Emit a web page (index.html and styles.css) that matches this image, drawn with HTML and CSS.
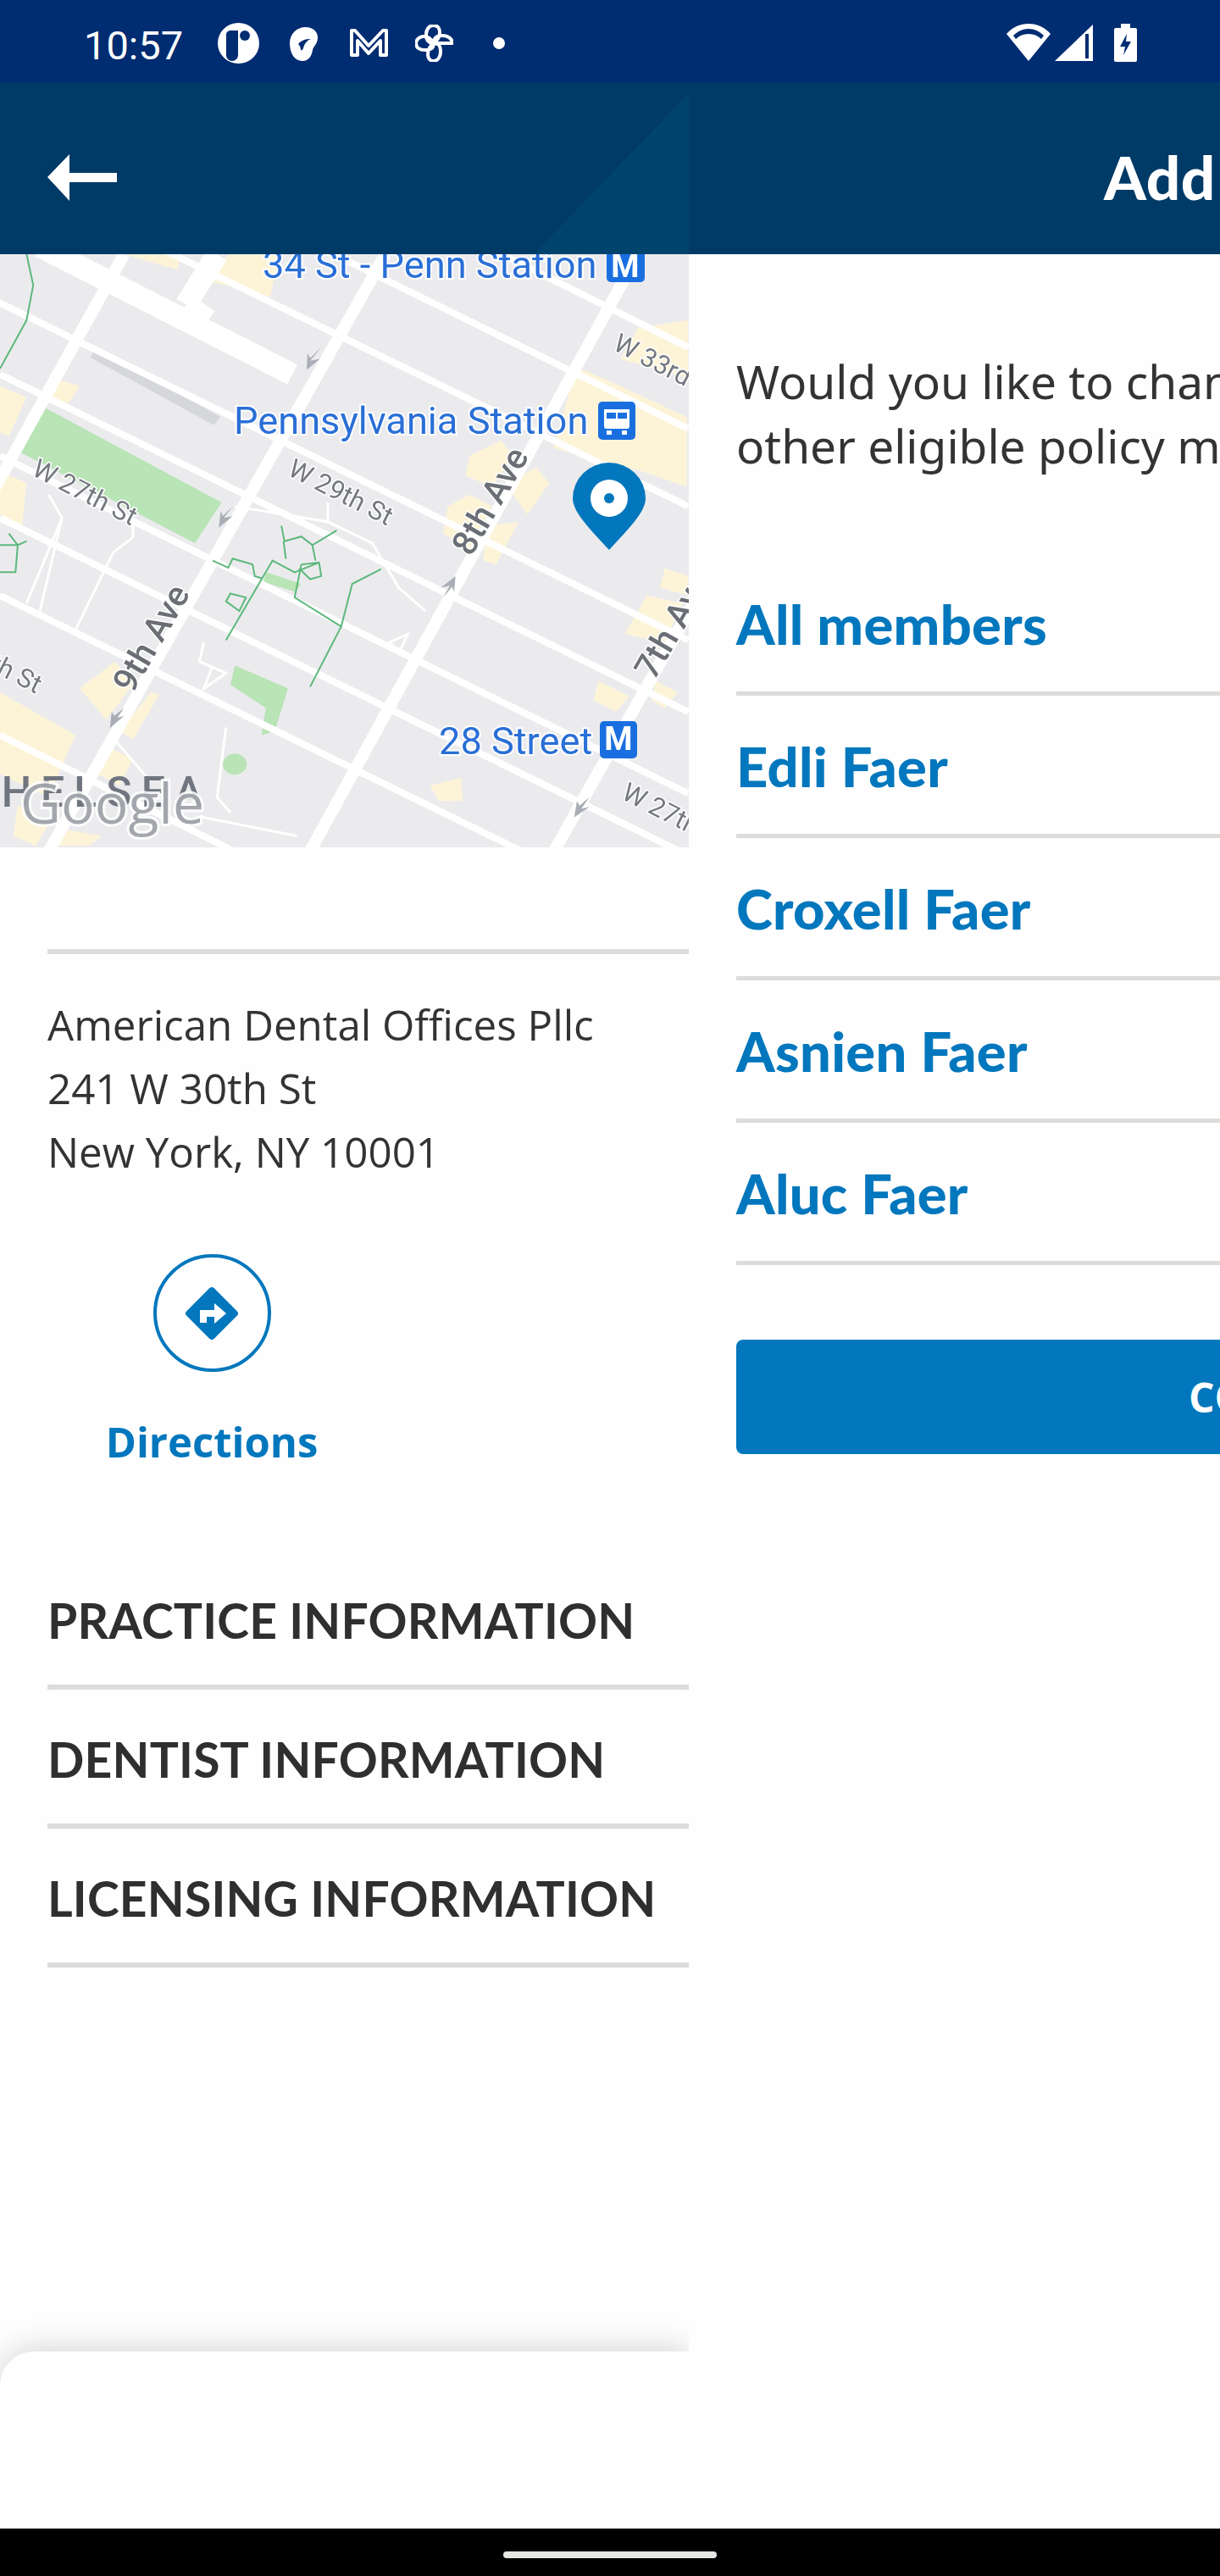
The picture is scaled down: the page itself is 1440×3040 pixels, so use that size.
FILE: index.html
```html
<!DOCTYPE html>
<html lang="en">
<head>
<meta charset="utf-8">
<title>Add members</title>
<link rel="stylesheet" href="styles.css">
</head>
<body>
<div class="screen">
  <header class="status">
    <span class="time">10:57</span>
    <svg class="ic ic1" viewBox="0 0 49 48"><ellipse cx="24.500" cy="24" rx="24.500" ry="24" class="w"/><path d="M10 15a5 5 0 0 1 5-6h9v29a5 5 0 0 1-14 0z" class="d"/><path d="M19 14h5v24h-5z" class="d"/><circle cx="32" cy="15" r="6" class="d"/></svg>
    <svg class="ic ic2" viewBox="0 0 34 40"><path d="M1 19C1 8 9 0 20 0c8 0 14 5 14 12 0 8-5 10-6 15-1 7-5 13-12 13C6 40 1 30 1 19z" class="w"/><path d="M11 20c4-5 9-6 15-6-5 2-8 6-9 11-1 2-2 3-3 2 0-3-1-5-3-7z" class="d"/></svg>
    <svg class="ic ic3" viewBox="0 0 45 34"><path d="M2 32V3h4l16 18L39 3h4v29h-7V15L22 30 9 15v17z" class="o"/></svg>
    <svg class="ic ic4" viewBox="0 0 45 44"><path d="M22 22C16 22 13 19 13 12 13 5 17 1 22 1c5 0 7 4 7 8 0 6-3 10-7 13zM22 22c0-6 3-9 10-9 7 0 12 4 12 9H22zM22 22c6 0 8 3 8 10 0 7-4 11-8 11-5 0-7-4-7-8 0-6 3-10 7-13zM22 22c0 6-3 8-10 8C5 30 1 27 1 22c0-4 4-8 9-8 5 0 9 3 12 8z" class="o"/></svg>
    <span class="dot"></span>
    <span class="spacer"></span>
    <svg class="ic ic5" viewBox="0 0 52 44"><path d="M26 44 0 12C7 4 16 0 26 0s19 4 26 12z" class="w"/><path d="M8 14C13 9 19 6 26 6s13 3 18 8l-3 4C37 14 32 12 26 12s-11 2-15 6z" class="d"/></svg>
    <svg class="ic ic6" viewBox="0 0 45 43"><path d="M0 43 45 0v43z" class="w"/><path d="M36 11h4v29h-4z" class="d"/></svg>
    <svg class="ic ic7" viewBox="0 0 27 45"><path d="M8 0h11v5h6a2 2 0 0 1 2 2v36a2 2 0 0 1-2 2H2a2 2 0 0 1-2-2V7a2 2 0 0 1 2-2h6z" class="w"/><path d="M15 12 7 27h6l-2 10 9-16h-6z" class="d"/></svg>
  </header>

  <div class="appbar">
    <div class="appbar-left">
      <svg class="back" viewBox="0 0 82 55"><path d="M0 27 26 0v22h56v11H26v22z" class="w"/></svg>
    </div>
    <h1 class="title">Add</h1>
  </div>

  <main class="content">
    <section class="left">
      <svg class="map" viewBox="0 0 813 700">
        <rect width="813" height="700" class="m-bg"/>
        <g transform="scale(.523 .4577)">
          <path class="m-y" d="M0 340 60 370 20 470 0 460zM0 560 60 590 50 700 0 670zM120 320 180 340 150 390 110 370zM0 1130 170 1240 110 1400 0 1340zM180 1120 260 1050 300 1110 240 1200zM40 1420 110 1470 80 1525 30 1500zM130 1480 230 1500 200 1525 120 1525zM240 1270 300 1300 270 1370 220 1340zM340 1130 360 1135 300 1250 270 1230zM1060 520 1130 480 1160 520 1110 600 1050 570zM1010 650 1060 620 1110 650 1060 760 1000 720zM1100 700 1170 690 1120 800 1090 790zM1140 590 1210 550 1240 590 1190 670zM1250 500 1300 290 1400 340 1550 420 1550 600 1450 560zM1440 190 1553 170 1553 320 1400 270zM1460 880 1540 900 1500 1000 1410 980zM1500 810 1553 830 1553 880 1490 860zM1350 1100 1420 1140 1390 1180 1340 1150zM1480 1100 1530 1130 1500 1170 1470 1150zM970 1370 1040 1350 1045 1410 990 1410zM440 60 520 0 630 0 610 110zM280 0 410 0 400 40z"/>
          <path class="m-g" d="M100 395 500 640 440 745 45 510zM530 1060 650 1120 620 1230 590 1240 600 1170 520 1110zM600 820 680 850 665 870 595 845z"/>
          <circle cx="530" cy="1315" r="27" class="m-g"/>
          <path class="m-rail" d="M210 255 490 430"/>
          <g class="m-st">
            <path d="M-10 120 1553 995M0 310 1553 1180M0 520 1553 1390M0 680 1553 1550M0 880 1250 1580M0 1240 600 1580M300 -50 1553 650M700 -30 1553 450M1080 -30 1553 240"/>
          </g>
          <g class="m-av">
            <path d="M100 1560 870 0M690 1560 1440 0M1240 1560 1600 830M-20 620 280 0"/>
          </g>
          <path class="m-wide" d="M90 -20 660 310M420 130 490 0M420 130 470 170"/>
          <g class="m-path">
            <path d="M530 650 740 690 840 745 900 860 960 920M740 640V690M110 620 140 680 90 920M300 690 300 730 255 770 170 970M140 680 60 900M460 1000 450 1050 510 1080 460 1120 480 1060M510 1220 490 1400 520 1440M250 1240 340 1360M450 1450 670 1500M880 1000 920 980 900 1030z"/>
          </g>
          <g class="m-tr">
            <path d="M60 0 75 80 60 170 0 295M0 820 35 820 40 750 20 720M40 750 60 740M0 750 40 750M480 790 515 808 525 785 570 800 575 830 590 835M510 995 615 790 665 820 720 795M635 700 642 740 680 728 705 750 760 712M705 750 712 790M640 740 645 785M680 800 665 885 770 960 795 850 860 812M770 960 700 1115M520 875 555 885 540 920 510 895zM680 800 720 795 725 830 700 838 675 810"/>
          </g>
          <path class="m-arrow" d="M725 240 700 275 722 270 692 298 694 255 700 268zM525 650 505 680 525 675 494 705 498 662 503 675zM280 1170 265 1195 280 1190 248 1222 252 1180 258 1190zM1330 1400 1312 1430 1330 1425 1296 1452 1302 1410 1308 1422zM1000 885 1015 855 995 860 1028 830 1025 870 1020 858z"/>
        </g>

        <text class="m-blue" x="310" y="28">34 St - Penn Station</text>
        <rect x="716" y="-8" width="45" height="41" rx="5" class="m-badge"/>
        <text class="m-badge-t" x="738" y="27">M</text>
        <text class="m-blue" x="276" y="212">Pennsylvania Station</text>
        <rect x="706" y="174" width="44" height="45" rx="5" class="m-badge"/>
        <path class="w" d="M713 183h30v20a3 3 0 0 1-3 3h-24a3 3 0 0 1-3-3zM716 208h6v5h-6zM734 208h6v5h-6z"/>
        <path class="m-badge" d="M716 187h11v7h-11zM729 187h11v7h-11z"/>
        <text class="m-blue" x="518" y="590">28 Street</text>
        <rect x="708" y="551" width="44" height="44" rx="5" class="m-badge"/>
        <text class="m-badge-t" x="730" y="585">M</text>

        <text class="m-label" transform="translate(338 260) rotate(27)">W 29th St</text>
        <text class="m-label" transform="translate(36 260) rotate(27)">W 27th St</text>
        <text class="m-label" transform="translate(722 112) rotate(27)">W 33rd St</text>
        <text class="m-label" transform="translate(732 642) rotate(27)">W 27th</text>
        <text class="m-label" transform="translate(-14 490) rotate(27)">th St</text>
        <text class="m-ave" transform="translate(556 358) rotate(-60)">8th Ave</text>
        <text class="m-ave" transform="translate(156 520) rotate(-60)">9th Ave</text>
        <text class="m-ave" transform="translate(772 504) rotate(-60)">7th Ave</text>

        <text class="m-hood" x="-42" y="652">CHELSEA</text>
        <text class="m-google" x="24" y="672">Google</text>

        <path class="m-pin" d="M719 349C695 323 676 304 676 288a43 42 0 0 1 86 0c0 16-19 35-43 61z"/>
        <circle cx="719" cy="288" r="22" class="w"/>
        <circle cx="719" cy="288" r="6" class="m-pin"/>
      </svg>

      <div class="left-body">
        <hr class="rule rule-top">
        <address class="addr">
          <span class="addr-l1">American Dental Offices Pllc</span>
          <span class="addr-l2">241 W 30th St</span>
          <span class="addr-l3">New York, NY 10001</span>
        </address>
        <div class="dir">
          <span class="dir-circle">
            <svg class="dir-ic" viewBox="0 0 70 70"><rect x="12" y="12" width="46" height="46" rx="4" transform="rotate(45 35 35)" class="b"/><path d="M21 46V31h17v-8l14 12-14 12v-8h-9v7z" class="w"/></svg>
          </span>
          <span class="dir-label">Directions</span>
        </div>
        <div class="sec sec-first">PRACTICE INFORMATION</div>
        <div class="sec">DENTIST INFORMATION</div>
        <div class="sec">LICENSING INFORMATION</div>
      </div>
      <div class="sheet"></div>
    </section>

    <section class="right">
      <p class="intro"><span>Would you like to change the dentist for</span><span>other eligible policy members?</span></p>
      <ul class="members">
        <li>All members</li>
        <li>Edli Faer</li>
        <li>Croxell Faer</li>
        <li>Asnien Faer</li>
        <li>Aluc Faer</li>
      </ul>
      <div class="btn">CONTINUE</div>
    </section>
  </main>

  <footer class="nav"><span class="pill"></span></footer>
</div>
</body>
</html>
```

FILE: styles.css
```css
* { box-sizing: border-box; }
html, body { margin: 0; padding: 0; background: #fefefe; }
.screen { width: 1440px; height: 3040px; display: flex; flex-direction: column; overflow: hidden; font-family: "Open Sans", sans-serif; color: #333; }

.w { fill: #fff; }
.d { fill: #002c72; }
.b { fill: #0277bd; }
.o { fill: none; stroke: #fff; stroke-width: 4; stroke-linejoin: round; }

.status { height: 97px; background: #002c72; display: flex; align-items: flex-start; padding-left: 99px; flex: none; }
.time { font: 400 47px/1 Roboto, sans-serif; color: #fff; margin-top: 30px; width: 116px; white-space: nowrap; }
.ic { display: block; flex: none; }
.ic1 { width: 49px; height: 48px; margin: 27px 0 0 42px; }
.ic2 { width: 34px; height: 40px; margin: 32px 0 0 35px; }
.ic3 { width: 45px; height: 34px; margin: 33px 0 0 38px; }
.ic4 { width: 45px; height: 44px; margin: 29px 0 0 32px; }
.dot { width: 14px; height: 14px; border-radius: 50%; background: #fff; margin: 44px 0 0 47px; }
.spacer { flex: 1; }
.ic5 { width: 52px; height: 44px; margin: 28px 0 0 0; }
.ic6 { width: 45px; height: 43px; margin: 29px 0 0 5px; }
.ic7 { width: 27px; height: 45px; margin: 28px 98px 0 25px; }

.appbar { height: 203px; background: #003a66; display: flex; flex: none; color: #fff; }
.appbar-left { width: 813px; flex: none; position: relative; padding: 85px 0 0 56px; }
.appbar-left::after { content: ""; position: absolute; inset: 0; background: #00446e; clip-path: polygon(630px 203px, 813px 13px, 813px 203px); }
.back { width: 82px; height: 55px; display: block; }
.title { margin: 0; padding: 69px 0 0 490px; font: 900 71px/1.2 Lato, sans-serif; letter-spacing: .6px; white-space: nowrap; }

.content { flex: 1; display: flex; min-height: 0; }

.left { width: 813px; flex: none; display: flex; flex-direction: column; position: relative; overflow: hidden; }
.map { width: 813px; height: 700px; display: block; flex: none; filter: blur(.6px); }
.m-bg { fill: #ebebee; }
.m-y { fill: #fdf4d8; }
.m-g { fill: #b9e4b6; }
.m-rail { stroke: #d6d7da; stroke-width: 26; fill: none; }
.m-st path { stroke: #fff; stroke-width: 8; vector-effect: non-scaling-stroke; fill: none; }
.m-av path { stroke: #fff; stroke-width: 14; vector-effect: non-scaling-stroke; fill: none; }
.m-wide { stroke: #fff; stroke-width: 26; vector-effect: non-scaling-stroke; fill: none; }
.m-path path { stroke: #fff; stroke-width: 3; vector-effect: non-scaling-stroke; fill: none; }
.m-tr path { stroke: #5db87b; stroke-width: 2; vector-effect: non-scaling-stroke; fill: none; }
.m-arrow { fill: #a9adb5; }
.m-blue { font: 400 45.200px Roboto, sans-serif; fill: #2a6fd6; stroke: #fff; stroke-width: 4; paint-order: stroke; }
.m-badge { fill: #1a6fe0; }
.m-badge-t { font: 700 38px Roboto, sans-serif; fill: #fff; text-anchor: middle; }
.m-label { font: 400 31px Roboto, sans-serif; fill: #75797f; stroke: #fff; stroke-width: 3; paint-order: stroke; }
.m-ave { font: 500 41px Roboto, sans-serif; fill: #6b6f75; stroke: #fff; stroke-width: 3; paint-order: stroke; }
.m-hood { font: 500 50px Roboto, sans-serif; fill: #70757f; letter-spacing: 11px; }
.m-google { font: 500 66px "Open Sans", sans-serif; fill: #8c9097; fill-opacity: .8; stroke: #fff; stroke-width: 6; stroke-opacity: .85; paint-order: stroke; }
.m-pin { fill: #0277bd; }

.left-body { padding-left: 56px; display: flex; flex-direction: column; }
.rule { margin: 0; border: 0; height: 6px; background: #dcdcda; }
.rule-top { margin-top: 120px; }
.addr { font: normal 400 49.300px/75px "Open Sans", sans-serif; color: #333; margin-top: 45px; display: flex; flex-direction: column; }
.dir { width: 388px; display: flex; flex-direction: column; align-items: center; margin-top: 84px; }
.dir-circle { width: 139px; height: 139px; border: 4px solid #0277bd; border-radius: 50%; display: flex; align-items: center; justify-content: center; }
.dir-ic { width: 70px; height: 70px; display: block; }
.dir-label { font: 700 49px/68px "Open Sans", sans-serif; color: #0277bd; margin-top: 48px; }
.sec { height: 164px; border-bottom: 6px solid #dcdcda; font: 700 57px/1 Lato, sans-serif; color: #2f2f2f; padding-top: 54px; white-space: nowrap; letter-spacing: .2px; }
.sec-first { margin-top: 95px; }

.sheet { position: absolute; left: 0; top: 2475px; width: 813px; height: 300px; background: #fefefe; border-top-left-radius: 40px; box-shadow: 0 -2px 38px rgba(0, 0, 0, .18); }

.right { flex: 1; min-width: 0; padding-left: 56px; overflow: hidden; }
.intro { margin: 112px 0 0; width: 1200px; font: 400 55px/76px "Noto Sans", sans-serif; color: #333; display: flex; flex-direction: column; white-space: nowrap; }
.members { list-style: none; margin: 89px 0 0; padding: 0; width: 700px; }
.members li { height: 168px; border-bottom: 5px solid #dcdcda; font: 900 65px/1 Lato, sans-serif; letter-spacing: .3px; color: #0277bd; padding-top: 51px; white-space: nowrap; }
.btn { margin-top: 88px; width: 700px; height: 135px; border-radius: 8px; background: #0277bd; color: #fff; font: 700 48px/135px "Open Sans", sans-serif; padding-left: 534px; white-space: nowrap; }

.nav { height: 56px; flex: none; background: #000; display: flex; justify-content: center; padding-top: 27px; }
.pill { width: 252px; height: 8px; border-radius: 4px; background: #e6e6e4; display: block; }
```
